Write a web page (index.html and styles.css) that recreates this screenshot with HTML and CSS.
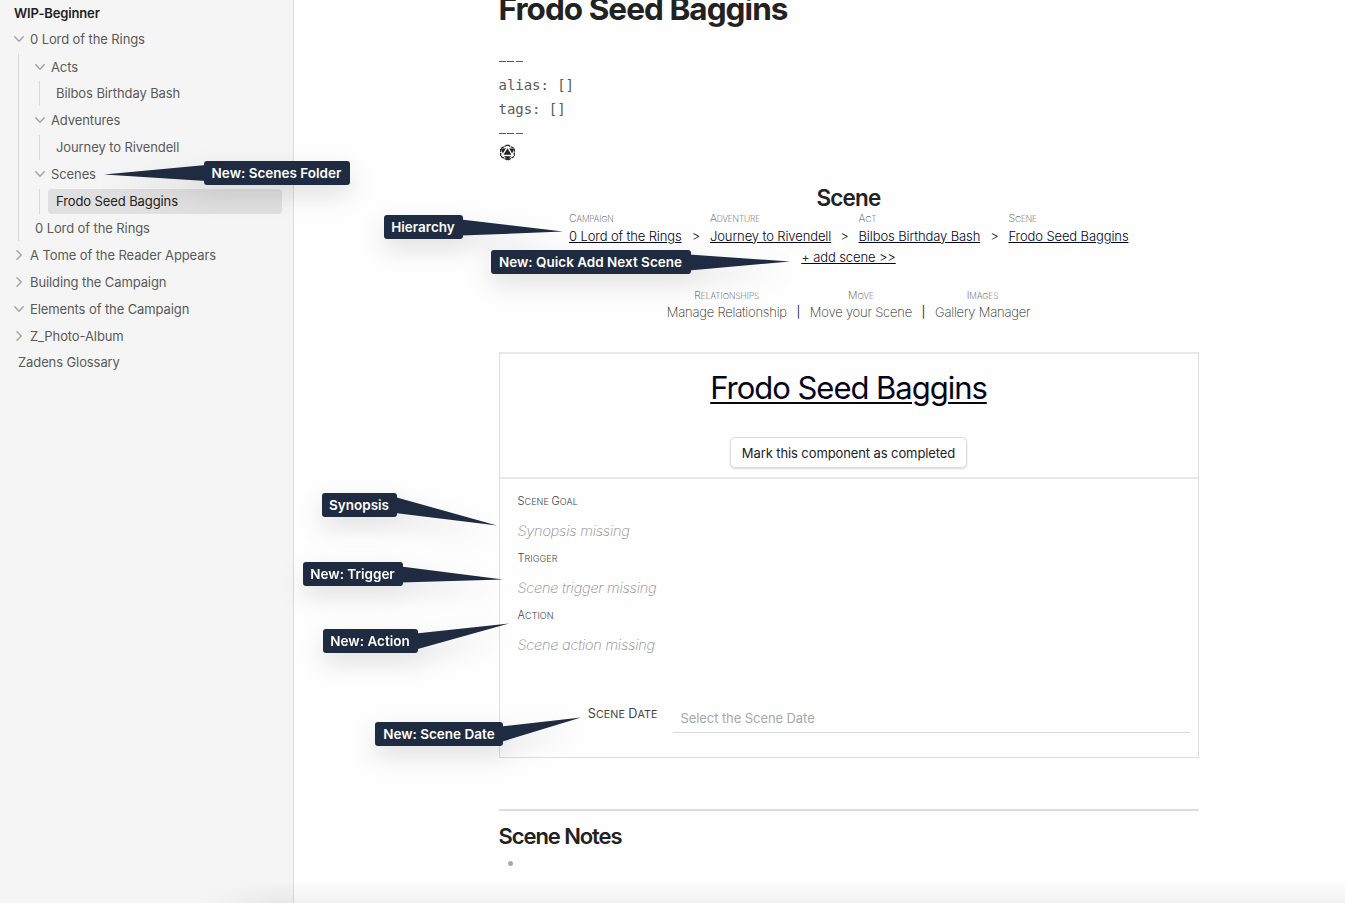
FILE: index.html
```
<!DOCTYPE html>
<html lang="en">
<head>
<meta charset="utf-8">
<title>Frodo Seed Baggins</title>
<link rel="stylesheet" href="styles.css">
</head>
<body>
<div class="app">
  <nav class="sidebar">
    <div class="row vault">WIP-Beginner</div>
    <div class="row folder"><svg class="chev" viewBox="0 0 10 10"><path d="M0.8 2.8 5 7.2 9.2 2.8"/></svg><span>0 Lord of the Rings</span></div>
    <div class="tree">
      <div class="row folder"><svg class="chev" viewBox="0 0 10 10"><path d="M0.8 2.8 5 7.2 9.2 2.8"/></svg><span>Acts</span></div>
      <div class="leafs"><div class="leaf">Bilbos Birthday Bash</div></div>
      <div class="row folder"><svg class="chev" viewBox="0 0 10 10"><path d="M0.8 2.8 5 7.2 9.2 2.8"/></svg><span>Adventures</span></div>
      <div class="leafs"><div class="leaf">Journey to Rivendell</div></div>
      <div class="row folder"><svg class="chev" viewBox="0 0 10 10"><path d="M0.8 2.8 5 7.2 9.2 2.8"/></svg><span>Scenes</span></div>
      <div class="leafs"><div class="leaf active">Frodo Seed Baggins</div></div>
      <div class="row note">0 Lord of the Rings</div>
    </div>
    <div class="row folder"><svg class="chev" viewBox="0 0 10 10"><path d="M3 0.8 7.2 5 3 9.2"/></svg><span>A Tome of the Reader Appears</span></div>
    <div class="row folder"><svg class="chev" viewBox="0 0 10 10"><path d="M3 0.8 7.2 5 3 9.2"/></svg><span>Building the Campaign</span></div>
    <div class="row folder"><svg class="chev" viewBox="0 0 10 10"><path d="M0.8 2.8 5 7.2 9.2 2.8"/></svg><span>Elements of the Campaign</span></div>
    <div class="row folder"><svg class="chev" viewBox="0 0 10 10"><path d="M3 0.8 7.2 5 3 9.2"/></svg><span>Z_Photo-Album</span></div>
    <div class="row root-note">Zadens Glossary</div>
  </nav>

  <main class="page">
    <h1 class="title">Frodo Seed Baggins</h1>
    <div class="frontmatter">
      <div class="dashes"><i></i><i></i><i></i></div>
      <div>alias: []</div>
      <div>tags: []</div>
      <div class="dashes"><i></i><i></i><i></i></div>
    </div>
    <svg class="die" viewBox="0 0 16 16">
      <path class="ring" d="M8 .8 14.400 4.300v7.400L8 15.200 1.600 11.700V4.300z"/>
      <path class="ink" d="M8 4 11.700 10.200H4.300z"/>
      <path class="ink" d="M1.800 4.500 6.500 3.900 3.600 9z"/>
      <path class="ink" d="M14.200 4.500 9.500 3.900 12.400 9z"/>
      <path class="ink" d="M4.600 11.600h6.800L8 15z"/>
    </svg>

    <h2 class="kind">Scene</h2>
    <div class="crumbs">
      <div class="crumb"><span class="cap">Campaign</span><a>0 Lord of the Rings</a></div>
      <span class="sep">&gt;</span>
      <div class="crumb"><span class="cap">Adventure</span><a>Journey to Rivendell</a></div>
      <span class="sep">&gt;</span>
      <div class="crumb"><span class="cap">Act</span><a>Bilbos Birthday Bash</a></div>
      <span class="sep">&gt;</span>
      <div class="crumb"><span class="cap">Scene</span><a>Frodo Seed Baggins</a></div>
    </div>
    <div class="add"><a>+ add scene &gt;&gt;</a></div>
    <div class="tools">
      <div class="tool"><span class="cap">Relationships</span><span class="act">Manage Relationship</span></div>
      <span class="bar">|</span>
      <div class="tool"><span class="cap">Move</span><span class="act">Move your Scene</span></div>
      <span class="bar">|</span>
      <div class="tool"><span class="cap">Images</span><span class="act">Gallery Manager</span></div>
    </div>

    <section class="card">
      <header class="card-head">
        <a class="card-title">Frodo Seed Baggins</a>
        <button class="done">Mark this component as completed</button>
      </header>
      <div class="fields">
        <div class="label"><span>Scene</span> <span>Goal</span></div>
        <div class="empty">Synopsis missing</div>
        <div class="label"><span>Trigger</span></div>
        <div class="empty">Scene trigger missing</div>
        <div class="label"><span>Action</span></div>
        <div class="empty">Scene action missing</div>
      </div>
      <div class="date">
        <div class="date-label"><span>Scene</span> <span>Date</span></div>
        <div class="date-input">Select the Scene Date</div>
      </div>
    </section>

    <hr class="rule">
    <h2 class="notes">Scene Notes</h2>
    <ul class="list"><li class="bullet"></li></ul>
  </main>

  <div class="callouts">
    <svg class="tails" viewBox="0 0 1345 903">
      <path d="M104 174.500 206 165V181z"/>
      <path d="M461 219.500 563 231.600 461 235.500z"/>
      <path d="M689 254.500 790 261.500 689 270.500z"/>
      <path d="M395 497 497 525.500 395 513z"/>
      <path d="M401 566.500 503 579.500 401 582.500z"/>
      <path d="M416 633.500 509 623.500 416 649.500z"/>
      <path d="M501 726.500 581 717.500 501 742z"/>
    </svg>
    <span class="tag t-folder">New: Scenes Folder</span>
    <span class="tag t-hier">Hierarchy</span>
    <span class="tag t-quick">New: Quick Add Next Scene</span>
    <span class="tag t-syn">Synopsis</span>
    <span class="tag t-trig">New: Trigger</span>
    <span class="tag t-act">New: Action</span>
    <span class="tag t-date">New: Scene Date</span>
  </div>
  <div class="fade"></div>
</div>
</body>
</html>
```

FILE: styles.css
```
* { box-sizing: border-box; }
body { margin: 0; font-family: Inter, "Liberation Sans", sans-serif; background: #fefefe; color: #222; }
.app { position: relative; display: flex; width: 1345px; height: 903px; overflow: hidden; }

.sidebar { width: 294px; flex: none; background: #f5f5f5; border-right: 1px solid #dcdcdc; font-size: 13px; letter-spacing: -.1px; color: #5a5a5a; }
.row { display: flex; align-items: center; height: 27px; white-space: nowrap; }
.vault { height: 26px; padding: 0 0 1px 14px; font-weight: 600; letter-spacing: -.15px; color: #222; }
.folder { padding: 0 0 1px 14px; gap: 6px; }
.chev { width: 10px; height: 10px; flex: none; fill: none; stroke: #a5a5a5; stroke-width: 1.500; stroke-linecap: round; stroke-linejoin: round; }
.tree { margin: 1px 0 1px 18px; border-left: 1px solid #d9d9d9; }
.tree > .row:first-child { height: 26px; }
.tree .folder { padding-left: 16px; }
.leafs { margin: 1px 0 1px 20px; border-left: 1px solid #d9d9d9; }
.leaf { height: 25px; line-height: 25px; margin-left: 8px; width: 234px; padding-left: 8px; border-radius: 4px; }
.leaf.active { background: #e0e0e0; color: #222; }
.note { padding-left: 16px; height: 26px; }
.root-note { padding: 0 0 2px 18px; height: 26px; }

.page { width: 700px; margin-left: 204.500px; display: flex; flex-direction: column; }
.title { margin: -10px 0 0; height: 37px; font-size: 31.500px; line-height: 37px; font-weight: 700; letter-spacing: -.95px; white-space: nowrap; }
.frontmatter { margin-top: 22px; font: 14px/24px "DejaVu Sans Mono", monospace; letter-spacing: -.05px; color: #5a5a5a; }
.frontmatter > div { height: 24px; }
.dashes { display: flex; gap: 1.500px; align-items: center; }
.dashes i { width: 7px; height: 1px; background: #5a5a5a; }
.die { width: 17px; height: 17px; margin-top: -1px; }
.die .ink { fill: #222; }
.die .ring { fill: none; stroke: #222; stroke-width: 1.200; stroke-dasharray: 3 .7; }

.kind { margin: 23px 0 0; height: 28px; line-height: 28px; text-align: center; font-size: 22.500px; font-weight: 600; letter-spacing: -.8px; }
.cap { font-size: 8.400px; font-weight: 200; text-transform: uppercase; color: #444; line-height: 12px; height: 12px; }
.cap::first-letter { font-size: 10.500px; }
.crumbs { display: flex; align-items: flex-end; margin: 1px 0 0 70.500px; font-size: 13px; font-weight: 300; letter-spacing: -.11px; }
.crumb { display: flex; flex-direction: column; gap: 1px; white-space: nowrap; }
.crumb:nth-child(1) { width: 113px; }
.crumb:nth-child(3) { width: 120.500px; }
.crumb:nth-child(5) { width: 122px; }
.crumb:nth-child(7) { width: 121px; }
.crumb a, .add a { color: #05051a; text-decoration: underline; line-height: 20px; }
.sep { width: 28px; text-align: center; line-height: 20px; }
.add { text-align: center; font-size: 13px; font-weight: 300; line-height: 20px; letter-spacing: -.11px; margin-top: 1px; }
.tools { display: flex; justify-content: center; align-items: flex-end; margin-top: 23px; font-size: 13px; font-weight: 200; }
.tool { display: flex; flex-direction: column; align-items: center; line-height: 20px; white-space: nowrap; }
.act { letter-spacing: -.2px; color: #222; }
.bar { width: 23px; text-align: center; line-height: 20px; font-weight: 400; font-size: 11.500px; }

.card { margin-top: 30px; height: 406px; border: 1px solid #dedede; border-top: 2px solid #e8e8e8; }
.card-head { display: flex; flex-direction: column; align-items: center; height: 125px; border-bottom: 2px solid #e8e8e8; }
.card-title { margin-top: 14px; height: 40px; font-size: 31px; line-height: 40px; font-weight: 400; letter-spacing: -1.030px; color: #05051a; text-decoration: underline; text-decoration-thickness: 2px; text-underline-offset: 3px; white-space: nowrap; }
.done { margin-top: 29px; width: 237px; height: 31px; padding: 0; border: 1px solid #dcdcdc; border-radius: 5px; background: #fff; box-shadow: 0 1px 2px rgba(0,0,0,.14); font: 400 13px Inter, sans-serif; letter-spacing: -.1px; color: #222; white-space: nowrap; }
.fields { padding: 12px 18px 0; height: 219px; }
.label span, .date-label span { display: inline-block; text-transform: uppercase; }
.label { height: 20px; line-height: 20px; font-size: 9px; font-weight: 300; letter-spacing: .08px; color: #444; }
.label span::first-letter { font-size: 11px; }
.empty { height: 37px; line-height: 39px; font-size: 14.500px; font-weight: 200; font-style: italic; letter-spacing: -.2px; color: #888; }
.date { display: flex; padding-right: 8px; }
.date-label { width: 173px; padding: 6px 15px 0 0; text-align: right; font-size: 10.700px; letter-spacing: .1px; line-height: 20px; color: #444; }
.date-label span::first-letter { font-size: 12.700px; }
.date-input { flex: 1; height: 35px; padding: 3px 8px; line-height: 34px; font-size: 13px; letter-spacing: -.08px; color: #a8a8a8; border-bottom: 1px solid #d8d8d8; }

.rule { width: 100%; margin: 51px 0 0; height: 2px; border: 0; background: #dedede; }
.notes { margin: 11px 0 0; height: 30px; line-height: 28px; font-size: 22px; font-weight: 600; letter-spacing: -1.080px; }
.list { margin: 0; padding: 9px 0 0 9px; list-style: none; }
.bullet { width: 5px; height: 5px; border-radius: 50%; background: #aaa; }

/* Annotations float above the document */
.callouts { position: absolute; inset: 0; filter: drop-shadow(0 10px 12px rgba(0,0,0,.12)); }
.tails { position: absolute; inset: 0; width: 1345px; height: 903px; fill: #1f2b40; }
.tag { position: absolute; height: 24px; line-height: 24px; border-radius: 3px; background: #1f2b40; color: #fff; font-size: 13.500px; font-weight: 600; text-align: center; text-indent: -1px; white-space: nowrap; }
.t-folder { left: 204px; top: 161px; width: 146px; }
.t-hier { left: 384px; top: 215.400px; width: 79px; }
.t-quick { left: 491px; top: 250.400px; width: 200px; }
.t-syn { left: 322px; top: 493.400px; width: 75px; }
.t-trig { left: 303px; top: 562.400px; width: 100px; }
.t-act { left: 323px; top: 629.400px; width: 95px; }
.t-date { left: 375.400px; top: 722px; width: 128px; }
.fade { position: absolute; left: 200px; right: 0; bottom: 0; height: 22px; background: linear-gradient(transparent, rgba(0,0,0,.05)); -webkit-mask-image: linear-gradient(90deg, transparent, #000 80px); mask-image: linear-gradient(90deg, transparent, #000 80px); }
```
